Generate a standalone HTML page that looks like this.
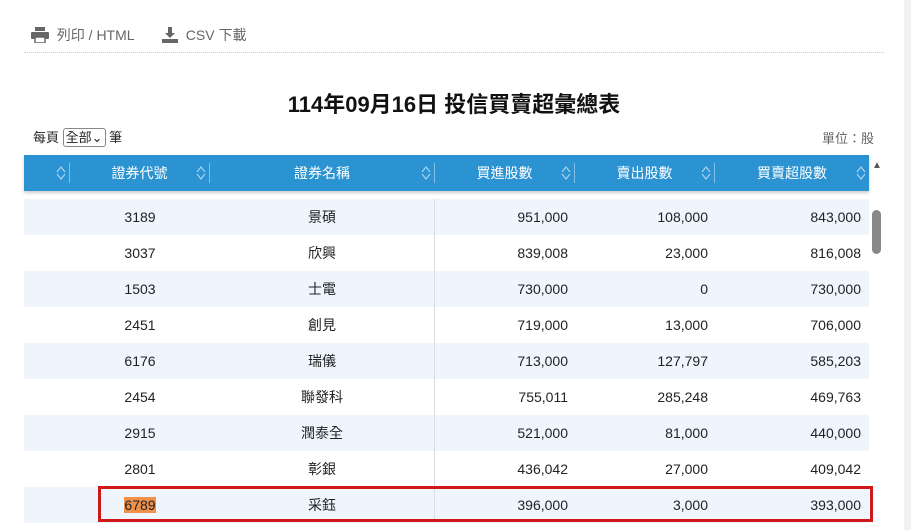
<!DOCTYPE html>
<html><head><meta charset="utf-8"><style>
*{margin:0;padding:0;box-sizing:border-box}
html,body{width:911px;height:530px;overflow:hidden}
body{background:#fff;font-family:"Liberation Sans","Noto Sans CJK TC",sans-serif;position:relative;color:#222}
.tool{position:absolute;top:25px;font-size:14px;color:#666}
.sep{position:absolute;left:24px;top:52px;width:860px;border-top:1px dotted #ccc}
h1{position:absolute;top:87px;left:0;width:908px;text-align:center;font-size:22px;font-weight:bold;color:#111}
.per{position:absolute;left:33px;top:127px;font-size:13px}
.per span{display:inline-block;border:1px solid #888;border-radius:3px;padding:0 2px;font-size:13px;line-height:17px}
.unit{position:absolute;right:37px;top:128px;font-size:13px;color:#666}
.hdr{position:absolute;left:24px;top:155px;width:845px;height:36px;background:#2b93d1;color:#fff;font-size:14px;box-shadow:0 2px 3px rgba(0,0,0,.2)}
.hdr div{position:absolute;border-right:1px solid #7fc0e8;top:8px;height:20px;line-height:20px;text-align:center}
.ar{position:absolute;right:3px;top:2px}
.row{position:absolute;left:24px;width:845px;height:36px;font-size:14px;color:#222}
.row div{position:absolute;top:0;height:36px;line-height:36px}
.row.a{background:#eef5fd}
.c1{left:46px;width:140px;text-align:center}
.c2{left:186px;width:225px;text-align:center;border-right:1px solid #ddd}
.c3{left:411px;width:133px;text-align:right}
.c4{left:551px;width:133px;text-align:right}
.c5{left:691px;width:146px;text-align:right}
.hl{background:#f0914a}
.box{position:absolute;left:98px;top:486px;width:775px;height:36px;border:3px solid #d01818}
.sb{position:absolute;left:872px;top:210px;width:9px;height:44px;background:#888;border-radius:5px}
.rtrack{position:absolute;left:904px;top:0;width:7px;height:530px;background:#f1f1f1}
</style></head><body>
<div class="tool" style="left:31px"><svg width="18" height="16" viewBox="0 0 18 16" style="vertical-align:-3px"><rect x="4" y="0" width="10" height="4" fill="#666"/><rect x="0" y="5" width="18" height="7" rx="1" fill="#666"/><rect x="4" y="10" width="10" height="6" fill="#fff" stroke="#666" stroke-width="1.5"/></svg>&nbsp; 列印 / HTML</div>
<div class="tool" style="left:162px"><svg width="16" height="16" viewBox="0 0 16 16" style="vertical-align:-3px"><path d="M6 0h4v6h3l-5 5-5-5h3z" fill="#666"/><rect x="0" y="12" width="16" height="4" fill="#666"/></svg>&nbsp; CSV 下載</div>
<div class="sep"></div>
<h1>114年09月16日 投信買賣超彙總表</h1>
<div class="per">每頁 <span>全部&#x2304;</span> 筆</div>
<div class="unit">單位：股</div>
<div class="hdr">
<div style="left:0;width:46px"><svg class="ar" width="10" height="16" viewBox="0 0 10 16"><path d="M1 7L5 2L9 7M1 9L5 14L9 9" fill="none" stroke="#a8d3ee" stroke-width="1.2"/></svg></div>
<div style="left:46px;width:140px">證券代號<svg class="ar" width="10" height="16" viewBox="0 0 10 16"><path d="M1 7L5 2L9 7M1 9L5 14L9 9" fill="none" stroke="#a8d3ee" stroke-width="1.2"/></svg></div>
<div style="left:186px;width:225px">證券名稱<svg class="ar" width="10" height="16" viewBox="0 0 10 16"><path d="M1 7L5 2L9 7M1 9L5 14L9 9" fill="none" stroke="#a8d3ee" stroke-width="1.2"/></svg></div>
<div style="left:411px;width:140px">買進股數<svg class="ar" width="10" height="16" viewBox="0 0 10 16"><path d="M1 7L5 2L9 7M1 9L5 14L9 9" fill="none" stroke="#a8d3ee" stroke-width="1.2"/></svg></div>
<div style="left:551px;width:140px">賣出股數<svg class="ar" width="10" height="16" viewBox="0 0 10 16"><path d="M1 7L5 2L9 7M1 9L5 14L9 9" fill="none" stroke="#a8d3ee" stroke-width="1.2"/></svg></div>
<div style="left:691px;width:154px;border:none">買賣超股數<svg class="ar" width="10" height="16" viewBox="0 0 10 16"><path d="M1 7L5 2L9 7M1 9L5 14L9 9" fill="none" stroke="#a8d3ee" stroke-width="1.2"/></svg></div>
</div>
<div style="position:absolute;left:872px;top:160px;font-size:10px;color:#555">▲</div>
<div class="row a" style="top:199px"><div class="c1">3189</div><div class="c2">景碩</div><div class="c3">951,000</div><div class="c4">108,000</div><div class="c5">843,000</div></div>
<div class="row" style="top:235px"><div class="c1">3037</div><div class="c2">欣興</div><div class="c3">839,008</div><div class="c4">23,000</div><div class="c5">816,008</div></div>
<div class="row a" style="top:271px"><div class="c1">1503</div><div class="c2">士電</div><div class="c3">730,000</div><div class="c4">0</div><div class="c5">730,000</div></div>
<div class="row" style="top:307px"><div class="c1">2451</div><div class="c2">創見</div><div class="c3">719,000</div><div class="c4">13,000</div><div class="c5">706,000</div></div>
<div class="row a" style="top:343px"><div class="c1">6176</div><div class="c2">瑞儀</div><div class="c3">713,000</div><div class="c4">127,797</div><div class="c5">585,203</div></div>
<div class="row" style="top:379px"><div class="c1">2454</div><div class="c2">聯發科</div><div class="c3">755,011</div><div class="c4">285,248</div><div class="c5">469,763</div></div>
<div class="row a" style="top:415px"><div class="c1">2915</div><div class="c2">潤泰全</div><div class="c3">521,000</div><div class="c4">81,000</div><div class="c5">440,000</div></div>
<div class="row" style="top:451px"><div class="c1">2801</div><div class="c2">彰銀</div><div class="c3">436,042</div><div class="c4">27,000</div><div class="c5">409,042</div></div>
<div class="row a" style="top:487px"><div class="c1"><span class="hl">6789</span></div><div class="c2">采鈺</div><div class="c3">396,000</div><div class="c4">3,000</div><div class="c5">393,000</div></div>
<div class="box"></div>
<div class="sb"></div>
<div class="rtrack"></div>
</body></html>
